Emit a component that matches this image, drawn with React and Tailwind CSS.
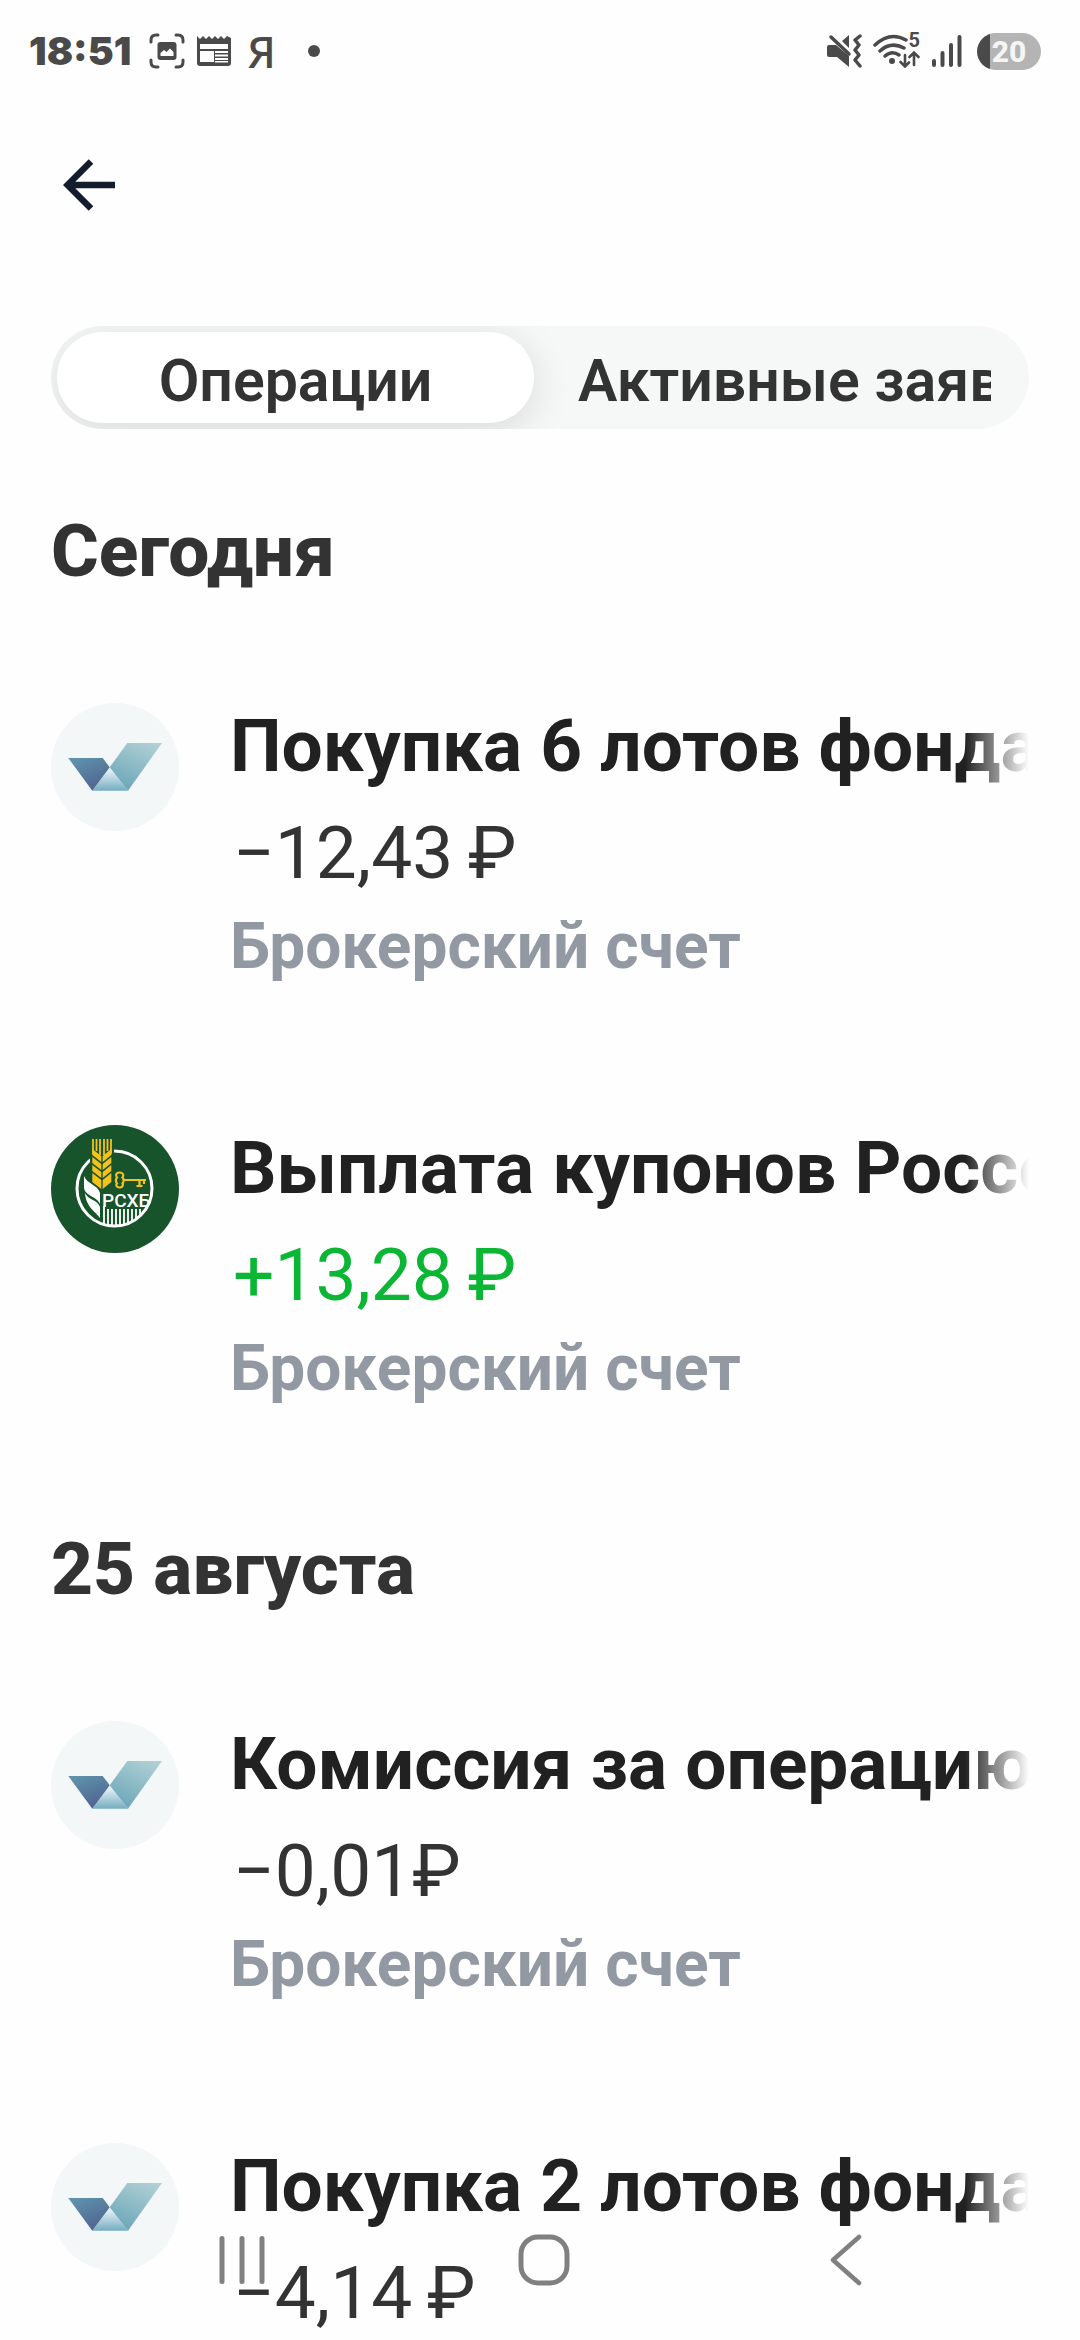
import React, { useState } from 'react';

// --- Data ---
const tabs = [
  { id: 'operations', label: 'Операции' },
  { id: 'orders', label: 'Активные заявки' },
];

const groups = [
  {
    date: 'Сегодня',
    items: [
      { id: 1, logo: 'fund', title: 'Покупка 6 лотов фонда Ликвидность', amount: '−12,43\u2009₽', account: 'Брокерский счет' },
      { id: 2, logo: 'rshb', title: 'Выплата купонов Россельхозбанк', amount: '+13,28\u2009₽', account: 'Брокерский счет', income: true },
    ],
  },
  {
    date: '25 августа',
    items: [
      { id: 3, logo: 'fund', title: 'Комиссия за операцию', amount: '−0,01₽', account: 'Брокерский счет' },
      { id: 4, logo: 'fund', title: 'Покупка 2 лотов фонда Ликвидность', amount: '−4,14\u2009₽', account: 'Брокерский счет' },
    ],
  },
];

// --- Logos ---
const FundLogo = ({ id }) => (
  <svg viewBox="0 0 128 128" className="w-32 h-32" aria-hidden="true">
    <defs>
      <linearGradient id={`left-${id}`} x1="0.2" y1="0" x2="0.7" y2="1">
        <stop offset="0" stopColor="#5f93aa" />
        <stop offset="1" stopColor="#4f6190" />
      </linearGradient>
      <linearGradient id={`right-${id}`} x1="0.8" y1="0" x2="0.3" y2="1">
        <stop offset="0" stopColor="#afd0d4" />
        <stop offset="1" stopColor="#6ba6b8" />
      </linearGradient>
      <linearGradient id={`base-${id}`} x1="0" y1="0" x2="0" y2="1">
        <stop offset="0.15" stopColor="#e3eef3" />
        <stop offset="1" stopColor="#74adc0" />
      </linearGradient>
    </defs>
    <circle cx="64" cy="64" r="64" fill="#f3f7f8" />
    <path d="M58.7 64.3 77 87.7H41.3Z" fill={`url(#base-${id})`} />
    <path d="M17.3 55H51.7L58.7 64.3 41.3 87.7Z" fill={`url(#left-${id})`} />
    <path d="M58.7 64.3 76.3 40H111L77 87.7Z" fill={`url(#right-${id})`} />
  </svg>
);

const RshbLogo = () => (
  <svg viewBox="0 0 128 128" className="w-32 h-32" aria-hidden="true">
    <defs>
      <clipPath id="rshb-ring">
        <circle cx="63.5" cy="63.5" r="38" />
      </clipPath>
    </defs>
    <circle cx="64" cy="64" r="64" fill="#17532b" />
    <circle cx="63.5" cy="63.5" r="37.5" fill="none" stroke="#fff" strokeWidth="3" />
    {/* Wheat ear */}
    <path d="M39 12H63V58L51 68 39 58Z" fill="#17532b" />
    <path d="M42 14V29M45.5 14V26M49 14V30M53 14V30M56.5 14V26M60 14V29" stroke="#f5c21b" strokeWidth="1.8" />
    <path
      d="M41.3 24 50.3 31V37L41.3 30ZM60.3 24 51.7 31V37L60.3 30ZM41.3 32 50.3 39V45L41.3 38ZM60.3 32 51.7 39V45L60.3 38ZM41.3 40 50.3 47V53L41.3 46ZM60.3 40 51.7 47V53L60.3 46ZM41.3 48 50.3 55V64L41.3 57ZM60.3 48 51.7 55V64L60.3 57Z"
      fill="#f5c21b"
    />
    {/* Leaves */}
    <path d="M33 51C36 59 47 60 49 68V79C46 71 33 71 33 62ZM34 68C37 75 47 75 49 82V93C44 86 35 82 34 68Z" fill="#fff" />
    {/* Key */}
    <path d="M68.5 47.5C64.5 47.5 64.5 51 66 52.5 64.5 54 64.5 57 66 58.5 64.5 60 65.5 62.5 68.5 62.5S72.5 60 71.5 58.5C73 57 73 54 71.5 52.5 73 51 72.5 47.5 68.5 47.5Z" fill="none" stroke="#f5c21b" strokeWidth="2.2" />
    <path d="M73 55H95M93 55V59M88.5 55V61M85.5 61H91.5" fill="none" stroke="#f5c21b" strokeWidth="2.2" />
    {/* Wordmark over the striped base of the ring */}
    <g clipPath="url(#rshb-ring)">
      <text x="51" y="82" fill="#fff" fontFamily="Roboto, sans-serif" fontSize="19" fontWeight="500">РСХБ</text>
      <path d="M53 81V100M57 84V100M61 84V100M65 84V100M69 84V100M73 84V100M77 84V100M81 84V100M85 84V100M89 84V100" stroke="#fff" strokeWidth="1.8" />
    </g>
  </svg>
);

// --- Status bar ---
const StatusBar = () => (
  <div className="flex h-[102px] shrink-0 items-center justify-between pl-[29px] pr-[39px] text-[#4a4a4a]">
    <div className="flex items-center">
      <span className="font-[Inter] text-[39px] leading-[44px] font-black">18:51</span>
      {/* Screenshot */}
      <svg viewBox="0 0 36 36" className="ml-[18px] h-9 w-9" aria-hidden="true">
        <path d="M2 9V7Q2 2 7 2H9M27 2H29Q34 2 34 7V9M34 27V29Q34 34 29 34H27M9 34H7Q2 34 2 29V27" fill="none" stroke="currentColor" strokeWidth="3" strokeLinecap="round" />
        <rect x="8.5" y="9" width="19" height="18" rx="3" fill="currentColor" />
        <path d="M11.5 23V20L15 17 17.5 19 21 15.5 24.5 19V23Z" fill="#fefefe" />
      </svg>
      {/* News */}
      <svg viewBox="0 0 34 30" className="ml-3 h-[30px] w-[34px]" aria-hidden="true">
        <path d="M0 0 3 3 6 0 9 3 12 0 15 3 18 0 21 3 24 0 27 3 30 0 34 2V27Q34 30 31 30H3Q0 30 0 27Z" fill="currentColor" />
        <path d="M3 8H31V13H3ZM3 15H17V26H3ZM18 15H31V17H18ZM18 18.5H31V20.5H18ZM18 22H31V24H18ZM18 25H31V26.5H18Z" fill="#fefefe" />
      </svg>
      <span className="ml-4 font-['Noto_Sans'] text-[44px] leading-[44px] font-medium">Я</span>
      <span className="ml-8 h-3 w-3 rounded-full bg-[#4a4a4a]" />
    </div>
    <div className="flex items-center">
      {/* Sound off, vibration on */}
      <svg viewBox="0 0 36 34" className="h-[34px] w-9" aria-hidden="true">
        <path d="M0 13Q0 11 2 11H9L22 22V33L10 23H2Q0 23 0 21ZM15 7 22 1V14Z" fill="currentColor" />
        <path d="M4 3 22 20" stroke="currentColor" strokeWidth="3.5" strokeLinecap="round" />
        <path d="M33 2 28 6 32 11 28 16 32 21 28 26 33 32" fill="none" stroke="currentColor" strokeWidth="3.5" strokeLinecap="round" strokeLinejoin="round" />
      </svg>
      {/* Wi-Fi */}
      <div className="relative ml-2.5 h-[34px] w-[47px]">
        <svg viewBox="0 0 47 34" className="h-[34px] w-[47px]" aria-hidden="true">
          <path d="M2 11Q17 -3 33 6M7 17Q18 7 31 14M12 22Q19 16 26 21" fill="none" stroke="currentColor" strokeWidth="3.5" strokeLinecap="round" />
          <circle cx="19" cy="27" r="3" fill="currentColor" />
          <path d="M32 21V32M27.5 28 32 32.5 36 28.5M41 31V19M36.5 23 41 18.5 45.5 23" fill="none" stroke="currentColor" strokeWidth="2.6" strokeLinecap="round" />
        </svg>
        <span className="absolute -top-1 right-0 font-[Roboto] text-xl leading-5 font-bold">5</span>
      </div>
      {/* Signal */}
      <svg viewBox="0 0 30 34" className="ml-3 h-[34px] w-[30px]" aria-hidden="true">
        <path d="M2 27V31M10.5 19V31M19 11V31M27.5 3V31" stroke="currentColor" strokeWidth="4" strokeLinecap="round" />
      </svg>
      {/* Battery */}
      <span className="ml-[15px] flex h-[37px] w-16 items-center justify-center rounded-full bg-linear-to-r from-[#4a4a4a] from-20% to-[#b4b4b4] to-20% font-[Roboto] text-[30px] leading-[37px] font-extrabold text-[#f5f5f5]">
        20
      </span>
    </div>
  </div>
);

// --- One operation ---
const Operation = ({ item }) => (
  <li className="flex items-start gap-[51px]">
    <div className="mt-[11px] shrink-0">
      {item.logo === 'rshb' ? <RshbLogo /> : <FundLogo id={item.id} />}
    </div>
    <div className="min-w-0 flex-1">
      <h3 className="overflow-hidden text-[73px] leading-[108px] font-bold whitespace-nowrap text-[#212121] [mask-image:linear-gradient(to_right,#000_calc(100%-64px),transparent)]">
        {item.title}
      </h3>
      <p className={`pl-[3px] text-[73px] leading-[106px] ${item.income ? 'text-[#0bb634]' : 'text-[#333333]'}`}>
        {item.amount}
      </p>
      <p className="text-[64px] leading-[82px] font-bold text-[#9299a2]">{item.account}</p>
    </div>
  </li>
);

// --- System navigation ---
const NavBar = () => (
  <nav className="fixed inset-x-0 bottom-0 flex h-40 justify-center pl-2 text-[#808080]">
    <button type="button" aria-label="Недавние" className="flex w-[302px] items-center justify-center">
      <svg viewBox="0 0 46 52" className="h-[52px] w-[46px]" aria-hidden="true">
        <path d="M3 4.5V47.5M23 4.5V47.5M43 4.5V47.5" stroke="currentColor" strokeWidth="5" strokeLinecap="round" />
      </svg>
    </button>
    <button type="button" aria-label="Домой" className="flex w-[302px] items-center justify-center">
      <svg viewBox="0 0 52 52" className="h-[52px] w-[52px]" aria-hidden="true">
        <rect x="3" y="3" width="46" height="46" rx="17" fill="none" stroke="currentColor" strokeWidth="5" />
      </svg>
    </button>
    <button type="button" aria-label="Назад" className="flex w-[302px] items-center justify-center">
      <svg viewBox="0 0 32 52" className="h-[52px] w-8" aria-hidden="true">
        <path d="M29 3 3 26 29 49" fill="none" stroke="currentColor" strokeWidth="4.5" strokeLinecap="round" strokeLinejoin="round" />
      </svg>
    </button>
  </nav>
);

const App = () => {
  const [activeTab, setActiveTab] = useState('operations');

  return (
    <div className="flex h-screen flex-col overflow-hidden bg-[#fefefe] font-[Roboto,sans-serif]">
      <StatusBar />

      <header className="flex h-[168px] shrink-0 items-center px-[51px] pb-0.5">
        <button type="button" aria-label="Назад" className="p-3 text-[#141d2d]">
          <svg viewBox="0 0 52 52" className="h-[52px] w-[52px]" aria-hidden="true">
            <path d="M28 2.5 4.5 26 28 49.5M5 26H52" fill="none" stroke="currentColor" strokeWidth="6.5" />
          </svg>
        </button>
      </header>

      <main className="min-h-0 flex-1 overflow-y-auto px-[51px] pt-14 [scrollbar-width:none]">
        {/* Tabs */}
        <div role="tablist" className="flex gap-3 overflow-hidden rounded-full bg-[#f6f8f8] p-1.5">
          {tabs.map((tab) => (
            <button
              key={tab.id}
              type="button"
              role="tab"
              aria-selected={activeTab === tab.id}
              onClick={() => setActiveTab(tab.id)}
              className={`h-[91px] min-w-0 flex-1 rounded-full px-8 pt-1.5 text-[59px] leading-[80px] font-semibold text-[#333333] ${
                activeTab === tab.id ? 'bg-white shadow-[0_8px_40px_rgba(0,0,0,0.12)]' : ''
              }`}
            >
              <span className={`block overflow-hidden whitespace-nowrap ${tab.id === 'orders' ? 'text-left' : ''}`}>
                {tab.label}
              </span>
            </button>
          ))}
        </div>

        {/* Operations by date */}
        <div className="mt-[79px] space-y-[116px]">
          {groups.map((group) => (
            <section key={group.date}>
              <h2 className="text-[73px] leading-[86px] font-extrabold text-[#333333]">{group.date}</h2>
              <ul className="mt-[98px] space-y-[126px]">
                {group.items.map((item) => (
                  <Operation key={item.id} item={item} />
                ))}
              </ul>
            </section>
          ))}
        </div>
      </main>

      <NavBar />
    </div>
  );
};

export default App;
